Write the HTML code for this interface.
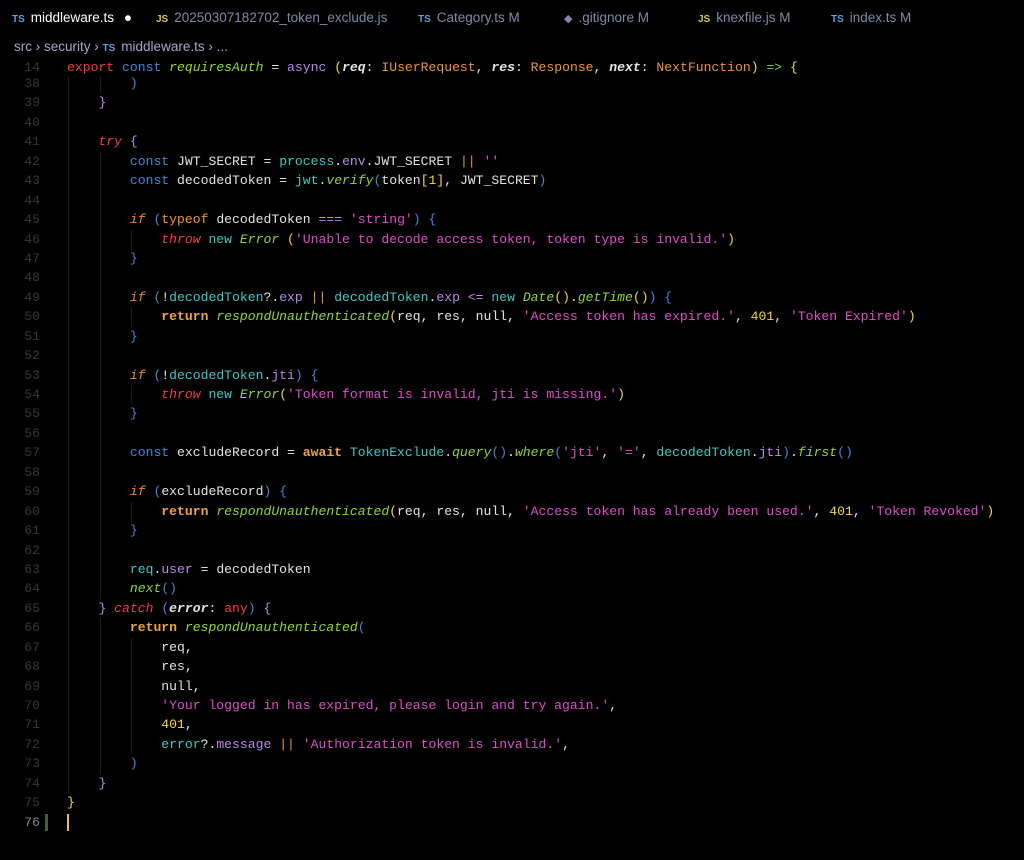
<!DOCTYPE html>
<html><head><meta charset="utf-8"><style>
body{margin:0;width:1024px;height:860px;background:#000;overflow:hidden;position:relative;font-family:"Liberation Sans",sans-serif}
.tabs{position:absolute;top:0;left:0;height:34px;width:1024px;font-size:13.5px;color:#7d8aa8}
.tab{position:absolute;top:10px;white-space:nowrap}
.ts{color:#5a9fd8;font-size:10px;font-weight:bold;margin-right:6px}
.js{color:#d8c840;font-size:10px;font-weight:bold;margin-right:6px}
.bc{position:absolute;top:39px;left:14px;font-size:13.5px;color:#aaa3cc;white-space:nowrap}
.code{position:absolute;left:0;top:74px;font-family:"Liberation Mono",monospace;font-size:13.1px;color:#e2e2e2}
.l{position:relative;height:19.44px;line-height:19.44px;white-space:pre}
.n{position:absolute;left:0;width:40px;text-align:right;color:#363636}
.t{position:absolute;left:67px}
.g1,.g2,.g3{position:absolute;top:0;width:1px;height:19.44px;background:#1c1c1c}
.g1{left:68px}.g2{left:100px}.g3{left:131px}
.sticky{position:absolute;top:58px;left:0;font-family:"Liberation Mono",monospace;font-size:13.1px;color:#e2e2e2;height:19px;line-height:19px;width:1024px;background:#000;white-space:pre;z-index:2}
.r{color:#f03a45}.ri{color:#f03a45;font-style:italic}.b{color:#3f86d6}.gi{color:#8fd62e;font-style:italic}.p{color:#b887ea}.o{color:#ea9438}.ob{color:#eba246;font-weight:bold}.oi{color:#ea8a2a;font-style:italic}.s{color:#e04acb}.c{color:#36c9c4}.y{color:#f2d63e}.w{color:#e6e6e6;font-weight:bold;font-style:italic}.gn{color:#70d040}
</style></head><body>
<div class="tabs">
<span class="tab" style="left:12px;color:#fff"><span class="ts">TS</span>middleware.ts <span style="color:#fff;margin-left:6px">●</span></span>
<span class="tab" style="left:156px"><span class="js">JS</span>20250307182702_token_exclude.js</span>
<span class="tab" style="left:418px"><span class="ts">TS</span>Category.ts M</span>
<span class="tab" style="left:564px"><span style="font-size:11px;margin-right:6px">◆</span>.gitignore M</span>
<span class="tab" style="left:698px"><span class="js">JS</span>knexfile.js M</span>
<span class="tab" style="left:831px"><span class="ts">TS</span>index.ts M</span>
</div>
<div class="bc">src › security › <span class="ts">TS</span>middleware.ts › ...</div>
<div class="sticky"><span style="position:absolute;left:0;width:40px;text-align:right;color:#363636">14</span><span style="position:absolute;left:67px"><span class="r">export</span> <span class="b">const</span> <span class="gi">requiresAuth</span> = <span class="p">async</span> <span class="y">(</span><span class="w">req</span>: <span class="o">IUserRequest</span>, <span class="w">res</span>: <span class="o">Response</span>, <span class="w">next</span>: <span class="o">NextFunction</span><span class="y">)</span> <span class="gn">=&gt;</span> <span class="y">{</span></span></div>
<div class="code">
<div class="l"><span class="n">38</span><i class="g1"></i><i class="g2"></i><span class="t">        <span class="b">)</span></span></div>
<div class="l"><span class="n">39</span><i class="g1"></i><span class="t">    <span class="p">}</span></span></div>
<div class="l"><span class="n">40</span><i class="g1"></i></div>
<div class="l"><span class="n">41</span><i class="g1"></i><span class="t">    <span class="ri">try</span> <span class="p">{</span></span></div>
<div class="l"><span class="n">42</span><i class="g1"></i><i class="g2"></i><span class="t">        <span class="b">const</span> JWT_SECRET = <span class="c">process</span>.<span class="p">env</span>.JWT_SECRET <span class="o">||</span> <span class="s">''</span></span></div>
<div class="l"><span class="n">43</span><i class="g1"></i><i class="g2"></i><span class="t">        <span class="b">const</span> decodedToken = <span class="c">jwt</span>.<span class="gi">verify</span><span class="b">(</span>token<span class="y">[</span><span class="y">1</span><span class="y">]</span>, JWT_SECRET<span class="b">)</span></span></div>
<div class="l"><span class="n">44</span><i class="g1"></i><i class="g2"></i></div>
<div class="l"><span class="n">45</span><i class="g1"></i><i class="g2"></i><span class="t">        <span class="oi">if</span> <span class="b">(</span><span class="o">typeof</span> decodedToken <span class="p">===</span> <span class="s">'string'</span><span class="b">)</span> <span class="b">{</span></span></div>
<div class="l"><span class="n">46</span><i class="g1"></i><i class="g2"></i><i class="g3"></i><span class="t">            <span class="ri">throw</span> <span class="c">new</span> <span class="gi">Error</span> <span class="y">(</span><span class="s">'Unable to decode access token, token type is invalid.'</span><span class="y">)</span></span></div>
<div class="l"><span class="n">47</span><i class="g1"></i><i class="g2"></i><span class="t">        <span class="b">}</span></span></div>
<div class="l"><span class="n">48</span><i class="g1"></i><i class="g2"></i></div>
<div class="l"><span class="n">49</span><i class="g1"></i><i class="g2"></i><span class="t">        <span class="oi">if</span> <span class="b">(</span>!<span class="c">decodedToken</span>?.<span class="p">exp</span> <span class="o">||</span> <span class="c">decodedToken</span>.<span class="p">exp</span> <span class="p">&lt;=</span> <span class="c">new</span> <span class="gi">Date</span><span class="y">()</span>.<span class="gi">getTime</span><span class="y">()</span><span class="b">)</span> <span class="b">{</span></span></div>
<div class="l"><span class="n">50</span><i class="g1"></i><i class="g2"></i><i class="g3"></i><span class="t">            <span class="ob">return</span> <span class="gi">respondUnauthenticated</span><span class="y">(</span>req, res, null, <span class="s">'Access token has expired.'</span>, <span class="y">401</span>, <span class="s">'Token Expired'</span><span class="y">)</span></span></div>
<div class="l"><span class="n">51</span><i class="g1"></i><i class="g2"></i><span class="t">        <span class="b">}</span></span></div>
<div class="l"><span class="n">52</span><i class="g1"></i><i class="g2"></i></div>
<div class="l"><span class="n">53</span><i class="g1"></i><i class="g2"></i><span class="t">        <span class="oi">if</span> <span class="b">(</span>!<span class="c">decodedToken</span>.<span class="p">jti</span><span class="b">)</span> <span class="b">{</span></span></div>
<div class="l"><span class="n">54</span><i class="g1"></i><i class="g2"></i><i class="g3"></i><span class="t">            <span class="ri">throw</span> <span class="c">new</span> <span class="gi">Error</span><span class="y">(</span><span class="s">'Token format is invalid, jti is missing.'</span><span class="y">)</span></span></div>
<div class="l"><span class="n">55</span><i class="g1"></i><i class="g2"></i><span class="t">        <span class="b">}</span></span></div>
<div class="l"><span class="n">56</span><i class="g1"></i><i class="g2"></i></div>
<div class="l"><span class="n">57</span><i class="g1"></i><i class="g2"></i><span class="t">        <span class="b">const</span> excludeRecord = <span class="ob">await</span> <span class="c">TokenExclude</span>.<span class="gi">query</span><span class="b">()</span>.<span class="gi">where</span><span class="b">(</span><span class="s">'jti'</span>, <span class="s">'='</span>, <span class="c">decodedToken</span>.<span class="p">jti</span><span class="b">)</span>.<span class="gi">first</span><span class="b">()</span></span></div>
<div class="l"><span class="n">58</span><i class="g1"></i><i class="g2"></i></div>
<div class="l"><span class="n">59</span><i class="g1"></i><i class="g2"></i><span class="t">        <span class="oi">if</span> <span class="b">(</span>excludeRecord<span class="b">)</span> <span class="b">{</span></span></div>
<div class="l"><span class="n">60</span><i class="g1"></i><i class="g2"></i><i class="g3"></i><span class="t">            <span class="ob">return</span> <span class="gi">respondUnauthenticated</span><span class="y">(</span>req, res, null, <span class="s">'Access token has already been used.'</span>, <span class="y">401</span>, <span class="s">'Token Revoked'</span><span class="y">)</span></span></div>
<div class="l"><span class="n">61</span><i class="g1"></i><i class="g2"></i><span class="t">        <span class="b">}</span></span></div>
<div class="l"><span class="n">62</span><i class="g1"></i><i class="g2"></i></div>
<div class="l"><span class="n">63</span><i class="g1"></i><i class="g2"></i><span class="t">        <span class="c">req</span>.<span class="p">user</span> = decodedToken</span></div>
<div class="l"><span class="n">64</span><i class="g1"></i><i class="g2"></i><span class="t">        <span class="gi">next</span><span class="b">()</span></span></div>
<div class="l"><span class="n">65</span><i class="g1"></i><span class="t">    <span class="p">}</span> <span class="ri">catch</span> <span class="b">(</span><span class="w">error</span>: <span class="r">any</span><span class="b">)</span> <span class="p">{</span></span></div>
<div class="l"><span class="n">66</span><i class="g1"></i><i class="g2"></i><span class="t">        <span class="ob">return</span> <span class="gi">respondUnauthenticated</span><span class="b">(</span></span></div>
<div class="l"><span class="n">67</span><i class="g1"></i><i class="g2"></i><i class="g3"></i><span class="t">            req,</span></div>
<div class="l"><span class="n">68</span><i class="g1"></i><i class="g2"></i><i class="g3"></i><span class="t">            res,</span></div>
<div class="l"><span class="n">69</span><i class="g1"></i><i class="g2"></i><i class="g3"></i><span class="t">            null,</span></div>
<div class="l"><span class="n">70</span><i class="g1"></i><i class="g2"></i><i class="g3"></i><span class="t">            <span class="s">'Your logged in has expired, please login and try again.'</span>,</span></div>
<div class="l"><span class="n">71</span><i class="g1"></i><i class="g2"></i><i class="g3"></i><span class="t">            <span class="y">401</span>,</span></div>
<div class="l"><span class="n">72</span><i class="g1"></i><i class="g2"></i><i class="g3"></i><span class="t">            <span class="c">error</span>?.<span class="p">message</span> <span class="o">||</span> <span class="s">'Authorization token is invalid.'</span>,</span></div>
<div class="l"><span class="n">73</span><i class="g1"></i><i class="g2"></i><span class="t">        <span class="b">)</span></span></div>
<div class="l"><span class="n">74</span><i class="g1"></i><span class="t">    <span class="p">}</span></span></div>
<div class="l"><span class="n">75</span><span class="t"><span class="y">}</span></span></div>
<div class="l"><span class="n" style="color:#888">76</span><i style="position:absolute;left:45px;top:1px;width:3px;height:17px;background:#4a5a3a"></i><i style="position:absolute;left:67px;top:1px;width:2px;height:17px;background:#e8c040"></i></div>
</div>
</body></html>
